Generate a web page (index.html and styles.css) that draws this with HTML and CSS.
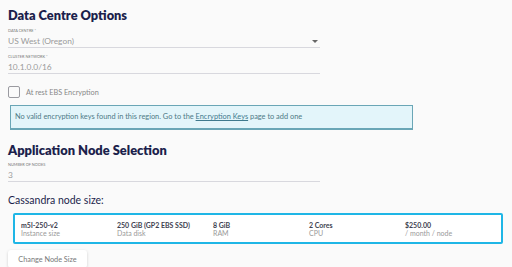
FILE: index.html
```html
<!DOCTYPE html>
<html lang="en">
<head>
    <meta charset="UTF-8">
    <title>Cluster options</title>
    <link rel="stylesheet" href="styles.css">
</head>
<body>
    <h1 class="section-title">Data Centre Options</h1>

    <div class="field">
        <label class="field-label">Data Centre *</label>
        <div class="field-value select">
            <span>US West (Oregon)</span>
            <span class="caret"></span>
        </div>
    </div>

    <div class="field">
        <label class="field-label">Cluster Network *</label>
        <div class="field-value">10.1.0.0/16</div>
    </div>

    <label class="check">
        <span class="box"></span>
        <span>At rest EBS Encryption</span>
    </label>

    <div class="notice">
        No valid encryption keys found in this region. Go to the <a href="#">Encryption Keys</a> page to add one
    </div>

    <h1 class="section-title second">Application Node Selection</h1>

    <div class="field">
        <label class="field-label">Number of nodes</label>
        <div class="field-value">3</div>
    </div>

    <h2 class="sub-title">Cassandra node size:</h2>

    <div class="node-card">
        <div class="spec"><b>m5l-250-v2</b><span>Instance size</span></div>
        <div class="spec"><b>250 GiB (GP2 EBS SSD)</b><span>Data disk</span></div>
        <div class="spec"><b>8 GiB</b><span>RAM</span></div>
        <div class="spec"><b>2 Cores</b><span>CPU</span></div>
        <div class="spec"><b>$250.00</b><span>/ month / node</span></div>
    </div>

    <button class="change-btn">Change Node Size</button>
</body>
</html>
```

FILE: styles.css
```css
body {
    margin: 0;
    padding: 0 8px;
    background: #fafafa;
    font-family: Lato, sans-serif;
    color: #1c1f4c;
}

.section-title {
    font-size: 12.8px;
    font-weight: 800;
    line-height: 20px;
    margin: 0;
    padding: 5px 0 2px;
}
.section-title.second { padding: 10px 0 1px; font-size: 12.9px; }

.field { width: 312px; margin-bottom: 5px; }
.field-label {
    display: block;
    font-size: 3.9px;
    line-height: 8px;
    text-transform: uppercase;
    color: #777;
}
.field-value {
    font-size: 8.4px;
    color: #9a9a9a;
    height: 12px;
    line-height: 12px;
    border-bottom: 1px solid #d8d8de;
}
.select { display: flex; justify-content: space-between; align-items: center; }
.caret {
    width: 0;
    height: 0;
    border-left: 3px solid transparent;
    border-right: 3px solid transparent;
    border-top: 3px solid #666;
    margin-right: 2px;
}

.check {
    display: flex;
    align-items: center;
    gap: 6px;
    height: 12px;
    font-size: 7.3px;
    color: #888;
    margin-top: 12px;
}
.check .box {
    width: 10px;
    height: 10px;
    border: 1px solid #9a9aa0;
    border-radius: 2px;
}

.notice {
    box-sizing: border-box;
    margin: 7px 0 0 2px;
    width: 403px;
    height: 25px;
    line-height: 22px;
    padding-left: 4px;
    background: #e3f5fa;
    border: 1px solid #6aa6b6;
    border-bottom-width: 2px;
    font-size: 7.4px;
    color: #4e7a86;
}
.notice a { color: #3f7a8e; }

.sub-title {
    font-size: 10.5px;
    font-weight: normal;
    line-height: 14px;
    margin: 11px 0 0;
}

.node-card {
    box-sizing: border-box;
    display: grid;
    grid-template-columns: repeat(5, 96px);
    margin: 6px 0 0 5px;
    width: 490px;
    height: 31px;
    padding: 6px 0 0 6px;
    background: #fff;
    border: 2px solid #1fb6e6;
    border-radius: 2px;
}
.spec { display: flex; flex-direction: column; font-size: 7px; line-height: 8px; }
.spec b { color: #3e4150; }
.spec span { color: #9a9a9a; }

.change-btn {
    display: block;
    margin-top: 6px;
    width: 79px;
    height: 18px;
    padding: 0;
    border: none;
    border-radius: 3px;
    background: #fff;
    box-shadow: 0 1px 3px rgba(0, 0, 0, 0.18);
    font-family: inherit;
    font-size: 7.3px;
    color: #777;
}
```
